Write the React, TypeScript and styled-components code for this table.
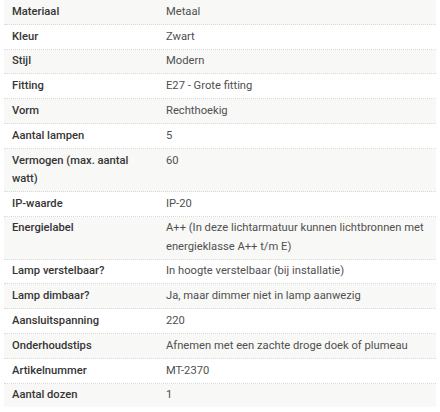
import React from "react";
import styled, { createGlobalStyle } from "styled-components";

const Global = createGlobalStyle`
  html, body { margin: 0; padding: 0; background: #ffffff; }
  body { font-family: Roboto, "Liberation Sans", Arial, sans-serif; }
`;

const Wrapper = styled.div`
  padding: 0 4px;
`;

const Table = styled.div`
  display: flex;
  flex-direction: column;
  width: 432px;
`;

const Row = styled.div<{ $shade: boolean; $last: boolean }>`
  display: grid;
  grid-template-columns: 154px 1fr;
  background: ${(p) => (p.$shade ? "#f8f8f7" : "#ffffff")};
  border-bottom: ${(p) => (p.$last ? "none" : "1px dotted #d9d9d9")};
`;

const Label = styled.div`
  padding: 2.8px 8px;
  font-size: 11.2px;
  line-height: 18.2px;
  font-weight: 500;
  color: #353535;
`;

const Value = styled.div`
  padding: 2.8px 8px;
  font-size: 11.2px;
  line-height: 18.2px;
  font-weight: 400;
  color: #505050;
`;

const specs: [string, string][] = [
  ["Materiaal", "Metaal"],
  ["Kleur", "Zwart"],
  ["Stijl", "Modern"],
  ["Fitting", "E27 - Grote fitting"],
  ["Vorm", "Rechthoekig"],
  ["Aantal lampen", "5"],
  ["Vermogen (max. aantal watt)", "60"],
  ["IP-waarde", "IP-20"],
  ["Energielabel", "A++ (In deze lichtarmatuur kunnen lichtbronnen met energieklasse A++ t/m E)"],
  ["Lamp verstelbaar?", "In hoogte verstelbaar (bij installatie)"],
  ["Lamp dimbaar?", "Ja, maar dimmer niet in lamp aanwezig"],
  ["Aansluitspanning", "220"],
  ["Onderhoudstips", "Afnemen met een zachte droge doek of plumeau"],
  ["Artikelnummer", "MT-2370"],
  ["Aantal dozen", "1"],
];

export default function App() {
  return (
    <Wrapper>
      <Global />
      <Table>
        {specs.map(([k, v], i) => (
          <Row key={k} $shade={i % 2 === 0} $last={i === specs.length - 1}>
            <Label>{k}</Label>
            <Value>{v}</Value>
          </Row>
        ))}
      </Table>
    </Wrapper>
  );
}
